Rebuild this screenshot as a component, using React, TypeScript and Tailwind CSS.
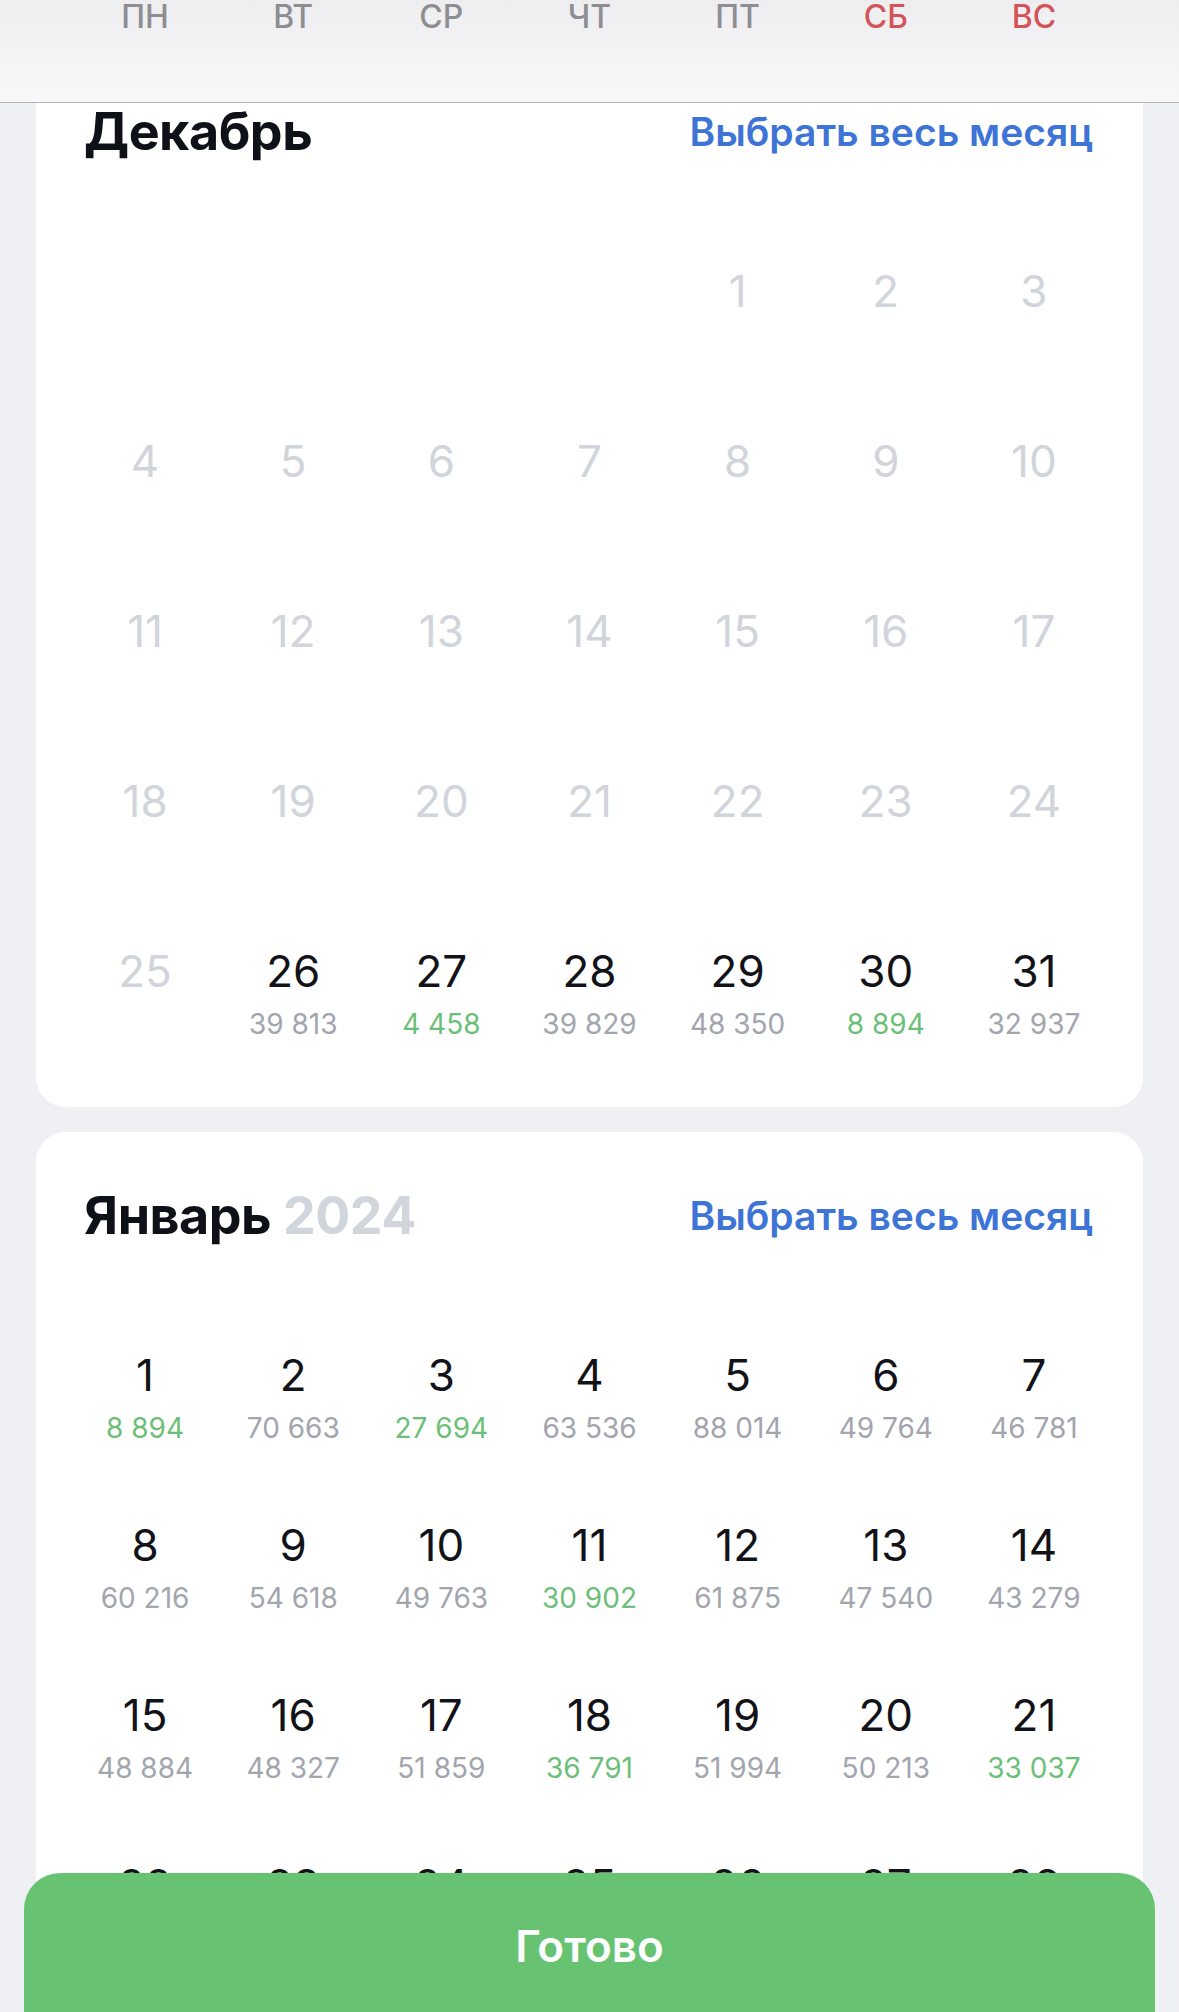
import React from 'react'

type Day = {
  n: number | null
  price?: string
  cheap?: boolean
  past?: boolean
}

const weekDays = [
  { label: 'ПН', weekend: false },
  { label: 'ВТ', weekend: false },
  { label: 'СР', weekend: false },
  { label: 'ЧТ', weekend: false },
  { label: 'ПТ', weekend: false },
  { label: 'СБ', weekend: true },
  { label: 'ВС', weekend: true },
]

const decPrices: Record<number, [string, boolean]> = {
  26: ['39 813', false],
  27: ['4 458', true],
  28: ['39 829', false],
  29: ['48 350', false],
  30: ['8 894', true],
  31: ['32 937', false],
}

const janPrices: Record<number, [string, boolean]> = {
  1: ['8 894', true],
  2: ['70 663', false],
  3: ['27 694', true],
  4: ['63 536', false],
  5: ['88 014', false],
  6: ['49 764', false],
  7: ['46 781', false],
  8: ['60 216', false],
  9: ['54 618', false],
  10: ['49 763', false],
  11: ['30 902', true],
  12: ['61 875', false],
  13: ['47 540', false],
  14: ['43 279', false],
  15: ['48 884', false],
  16: ['48 327', false],
  17: ['51 859', false],
  18: ['36 791', true],
  19: ['51 994', false],
  20: ['50 213', false],
  21: ['33 037', true],
}

const december: Day[] = [
  ...Array.from({ length: 4 }, () => ({ n: null })),
  ...Array.from({ length: 31 }, (_, i) => {
    const n = i + 1
    const p = decPrices[n]
    return p ? { n, price: p[0], cheap: p[1] } : { n, past: true }
  }),
]

const january: Day[] = Array.from({ length: 28 }, (_, i) => {
  const n = i + 1
  const p = janPrices[n]
  return p ? { n, price: p[0], cheap: p[1] } : { n }
})

const DayCell = ({ day }: { day: Day }) => (
  <div className="h-[106px] flex flex-col items-center">
    {day.n !== null && (
      <>
        <span
          className={`text-[44px] leading-[53px] ${
            day.past ? 'text-[#d1d4da]' : 'text-[#111318]'
          }`}
        >
          {day.n}
        </span>
        {day.price && (
          <span
            className={`text-[28px] leading-[53px] whitespace-nowrap ${
              day.cheap ? 'text-[#6cbf78]' : 'text-[#a2a5ad]'
            }`}
          >
            {day.price}
          </span>
        )}
      </>
    )}
  </div>
)

const MonthCard = ({
  title,
  year,
  days,
}: {
  title: string
  year?: string
  days: Day[]
}) => (
  <section className="bg-white rounded-[30px] pt-[54px] pb-[56px]">
    {/* Month header */}
    <div className="flex items-center justify-between pl-[48px] pr-[50px] h-[60px]">
      <h2 className="text-[52px] font-bold text-[#0e1117] leading-[60px] tracking-[-0.5px]">
        {title}
        {year && <span className="text-[#d1d5dc]"> {year}</span>}
      </h2>
      <button className="text-[39px] font-semibold text-[#3d74d6] leading-[60px]">
        Выбрать весь месяц
      </button>
    </div>

    {/* Days grid */}
    <div className="grid grid-cols-7 gap-y-[64px] px-[35px] mt-[103px]">
      {days.map((day, i) => (
        <DayCell key={i} day={day} />
      ))}
    </div>
  </section>
)

export default function App() {
  return (
    <div
      className="relative h-[2012px] w-full overflow-hidden bg-[#eff0f4]"
      style={{ fontFamily: 'Inter, "Noto Sans", sans-serif' }}
    >
      {/* Months */}
      <div className="flex flex-col gap-[25px] px-[36px] pt-[48px]">
        <MonthCard title="Декабрь" days={december} />
        <MonthCard title="Январь" year="2024" days={january} />
      </div>

      {/* Sticky weekday header */}
      <div className="absolute top-0 left-0 right-0 h-[103px] bg-gradient-to-b from-[#eeeef0] to-[#f8f8f9] border-b border-[#b3b3b8]">
        <div className="grid grid-cols-7 px-[71px]">
          {weekDays.map((d) => (
            <span
              key={d.label}
              className={`text-center text-[32px] font-medium leading-[34px] ${
                d.weekend ? 'text-[#d4535a]' : 'text-[#8d8d92]'
              }`}
            >
              {d.label}
            </span>
          ))}
        </div>
      </div>

      {/* Done button */}
      <button className="absolute left-[24px] right-[24px] top-[1873px] h-[200px] rounded-[36px] bg-[#67c372] flex justify-center pt-[43px]">
        <span className="text-[44px] font-semibold text-white leading-[60px]">Готово</span>
      </button>
    </div>
  )
}
